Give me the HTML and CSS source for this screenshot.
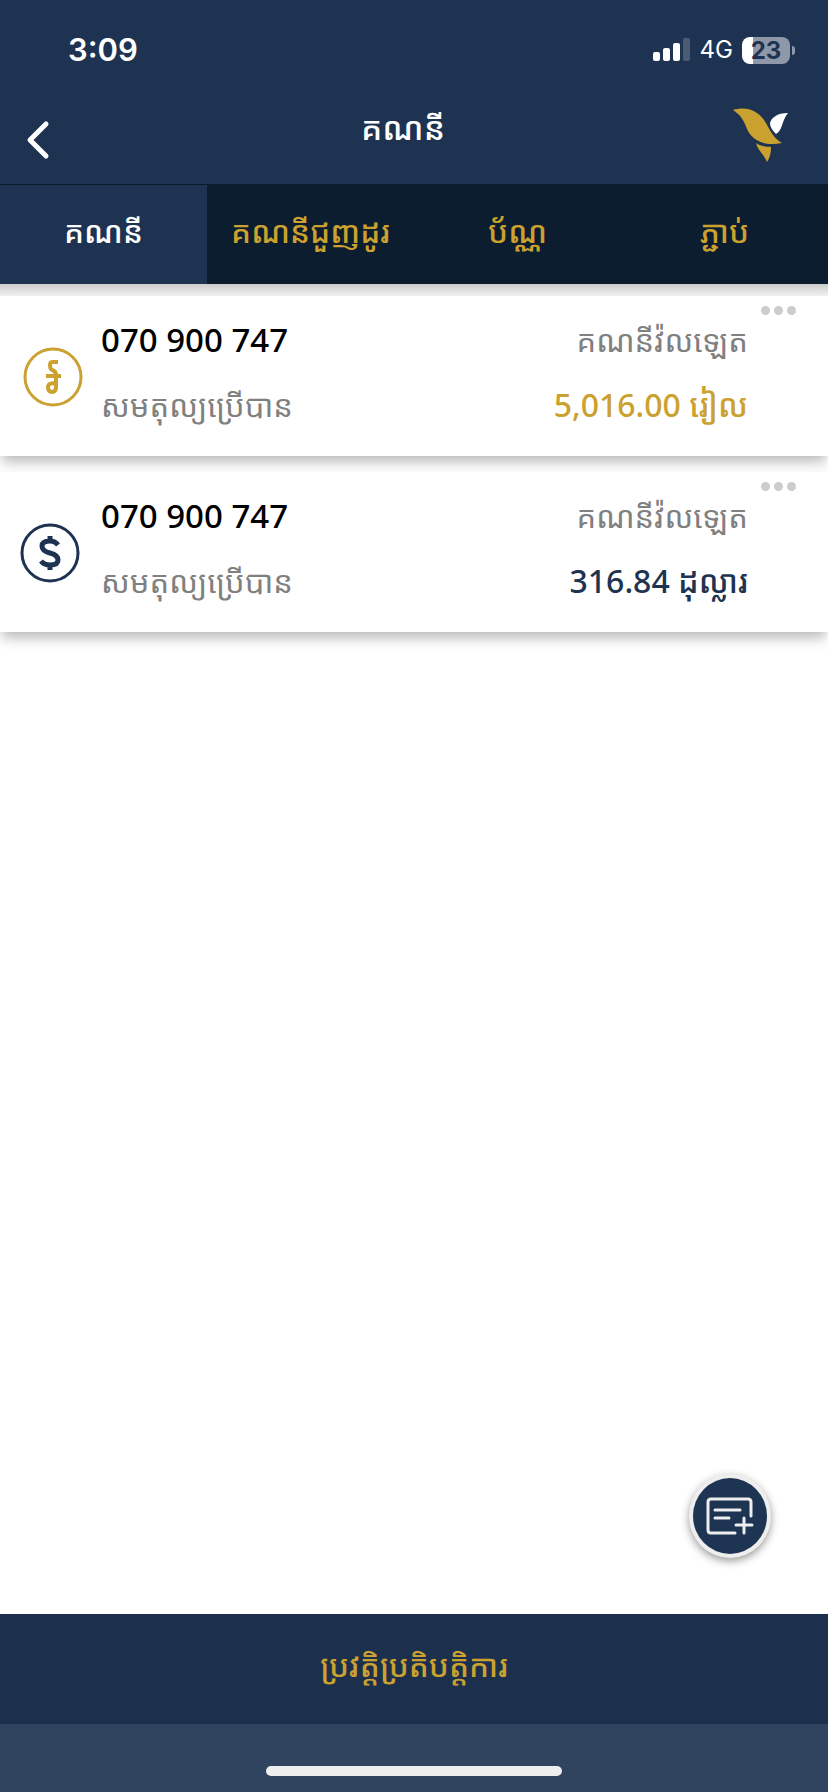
FILE: index.html
```html
<!DOCTYPE html>
<html lang="km">
<head>
<meta charset="utf-8">
<meta name="viewport" content="width=device-width, initial-scale=1">
<title>គណនី</title>
<link rel="stylesheet" href="styles.css">
</head>
<body>
<div class="app">
  <div class="status">
    <span class="time">3:09</span>
    <span class="indicators">
      <svg class="signal" viewBox="0 0 38 24" aria-hidden="true">
        <rect x="0" y="14" width="7" height="9" rx="2"/>
        <rect x="10" y="10" width="7" height="13" rx="2"/>
        <rect x="20" y="5" width="7" height="18" rx="2"/>
        <rect x="30" y="0" width="7" height="23" rx="2" opacity=".2"/>
      </svg>
      <span class="network">4G</span>
      <span class="battery"><span class="level">23</span></span>
    </span>
  </div>

  <header class="header">
    <button class="back" type="button" aria-label="ថយក្រោយ">
      <svg viewBox="0 0 24 40" aria-hidden="true"><path d="M20 4 L4 20 L20 36"/></svg>
    </button>
    <h1 class="title">គណនី</h1>
    <svg class="logo" viewBox="0 0 80 80" aria-hidden="true">
      <path fill="#cba12f" d="M13 20 C26 16 37 20 44 30 C50 39 52 47 62 53 C46 56 33 52 27 39 C24 31 21 25 13 20Z"/>
      <path fill="#fff" d="M68 23 C57 23 51 28 50 33 C50 37 53 41 56 44 C63 40 61 32 68 23Z"/>
      <path fill="#cba12f" d="M36 53 C40 56 46 57 51 57 C51 63 50 67 47 72 C44 64 38 61 36 53Z"/>
    </svg>
  </header>

  <nav class="tabs">
    <a class="tab active" href="#accounts" aria-current="page">គណនី</a>
    <a class="tab" href="#trading">គណនីជួញដូរ</a>
    <a class="tab" href="#cards">ប័ណ្ណ</a>
    <a class="tab" href="#link">ភ្ជាប់</a>
  </nav>

  <main class="content">
    <article class="card gold">
      <svg class="currency" viewBox="0 0 60 60" aria-hidden="true">
        <circle cx="30" cy="30" r="28"/>
        <path class="riel" d="M35 15 H30 Q27 15 27 18 Q27 22 29 23 Q33 24 33 28 V40 Q33 45 29 45 Q25 45 25 40 Q25 36 32 36 M23 29 H38"/>
      </svg>
      <div class="info">
        <strong class="number">070 900 747</strong>
        <span class="label">សមតុល្យប្រើបាន</span>
      </div>
      <div class="info end">
        <span class="label">គណនីវ៉លឡេត</span>
        <strong class="amount">5,016.00 រៀល</strong>
      </div>
      <button class="more" type="button" aria-label="ជម្រើស"><i></i><i></i><i></i></button>
    </article>

    <article class="card navy">
      <svg class="currency" viewBox="0 0 60 60" aria-hidden="true">
        <circle cx="30" cy="30" r="28"/>
        <path class="dollar" d="M38 22 Q35 18 30 18 Q22 18 22 23 Q22 28 30 30 Q38 32 38 37 Q38 42 30 42 Q24 42 21 38 M30 13 V18 M30 42 V47"/>
      </svg>
      <div class="info">
        <strong class="number">070 900 747</strong>
        <span class="label">សមតុល្យប្រើបាន</span>
      </div>
      <div class="info end">
        <span class="label">គណនីវ៉លឡេត</span>
        <strong class="amount">316.84 ដុល្លារ</strong>
      </div>
      <button class="more" type="button" aria-label="ជម្រើស"><i></i><i></i><i></i></button>
    </article>

    <button class="add" type="button" aria-label="បន្ថែមគណនី">
      <svg viewBox="0 0 48 38" aria-hidden="true"><path d="M29 36 H5 Q2 36 2 33 V5 Q2 2 5 2 H42 Q45 2 45 5 V19 M9 13 H34 M9 21 H23 M38 21 V36 M30 28 H46"/></svg>
    </button>
  </main>

  <footer class="footer">
    <button class="history" type="button">ប្រវត្តិប្រតិបត្តិការ</button>
    <div class="home"><span></span></div>
  </footer>
</div>
</body>
</html>
```
FILE: styles.css
```css
* {
  box-sizing: border-box;
}

body {
  margin: 0;
  background: #fff;
  font-family: "Noto Sans", "Noto Sans Khmer", sans-serif;
  font-size: 31px;
  line-height: 44px;
}

button {
  border: 0;
  padding: 0;
  background: none;
  font: inherit;
  color: inherit;
}

.app {
  display: flex;
  flex-direction: column;
  min-height: 100vh;
}

.status {
  display: flex;
  align-items: center;
  justify-content: space-between;
  height: 100px;
  padding: 0 33px 0 68px;
  background: #1e3351;
  color: #fff;
  font-family: Inter, sans-serif;
}

.time {
  font-size: 31px;
  font-weight: 600;
}

.indicators {
  display: flex;
  align-items: center;
  gap: 9px;
}

.signal {
  width: 38px;
  height: 24px;
  fill: #fff;
}

.network {
  font-size: 24px;
}

.battery {
  display: flex;
  align-items: center;
  gap: 2px;
}

.battery::after {
  content: "";
  width: 3px;
  height: 9px;
  border-radius: 0 4px 4px 0;
  background: #8e98a8;
}

.level {
  width: 48px;
  border-radius: 8px;
  background: linear-gradient(90deg, #fff 23%, #8e98a8 23%);
  color: #1e3351;
  font-size: 24px;
  font-weight: 700;
  line-height: 27px;
  text-align: center;
}

.header {
  display: grid;
  grid-template-columns: 86px 1fr 108px;
  height: 84px;
  background: #1e3351;
  color: #fff;
}

.back {
  padding: 0 0 4px 26px;
  text-align: left;
}

.back svg {
  display: block;
  width: 24px;
  height: 40px;
  fill: none;
  stroke: #fff;
  stroke-width: 5;
  stroke-linecap: round;
  stroke-linejoin: round;
}

.title {
  margin: 0;
  padding-top: 6px;
  font-size: 33px;
  font-weight: 500;
  text-align: center;
}

.logo {
  width: 80px;
  height: 80px;
  margin-top: -10px;
}

.tabs {
  display: grid;
  grid-template-columns: repeat(4, 1fr);
  height: 100px;
  border-top: 1px solid #0a1a2b;
  background: #0b1d2e;
}

.tab {
  display: flex;
  align-items: center;
  justify-content: center;
  padding-bottom: 8px;
  color: #cba12f;
  font-weight: 500;
  text-decoration: none;
}

.active {
  background: #1e3351;
  color: #fff;
}

.content {
  position: relative;
  display: flex;
  flex: 1;
  flex-direction: column;
  gap: 16px;
  padding-top: 12px;
  background: linear-gradient(#ccc, #f2f2f2 12px, #fff 12px);
}

.card {
  position: relative;
  display: flex;
  height: 160px;
  padding: 22px 80px 0 20px;
  background: #fff;
  box-shadow: 0 8px 12px -2px #bbb;
}

.gold {
  --accent: #cba12f;
  padding-left: 23px;
}

.navy {
  --accent: #1e3351;
}

.currency {
  width: 60px;
  height: 60px;
  margin-top: 29px;
  margin-right: 21px;
  fill: none;
  stroke: var(--accent);
  stroke-width: 3;
}

.gold .currency {
  margin-right: 18px;
}

.riel,
.dollar {
  stroke-width: 5;
  stroke-linejoin: round;
}

.riel {
  stroke-width: 4;
}

.info {
  display: flex;
  flex: 1;
  flex-direction: column;
  gap: 21px;
  white-space: nowrap;
}

.end {
  align-items: flex-end;
}

.number {
  color: #000;
  font-size: 33px;
  font-weight: 500;
}

.amount {
  color: var(--accent);
  font-size: 32px;
  font-weight: 500;
}

.label {
  color: #808080;
}

.more {
  position: absolute;
  top: 10px;
  right: 32px;
  display: flex;
  gap: 4px;
}

.more i {
  width: 9px;
  height: 9px;
  border-radius: 50%;
  background: #ccc;
}

.add {
  position: absolute;
  right: 57px;
  bottom: 56px;
  display: grid;
  place-items: center;
  width: 82px;
  height: 84px;
  border: 4px solid #eee;
  border-radius: 50%;
  background: #1d3552;
  box-shadow: 0 3px 8px #999;
}

.add svg {
  width: 48px;
  height: 38px;
  fill: none;
  stroke: #eee;
  stroke-width: 3;
  stroke-linecap: round;
}

.history {
  display: block;
  width: 100%;
  height: 110px;
  padding-bottom: 8px;
  background: #1c304e;
  color: #cba12f;
  font-weight: 500;
}

.home {
  display: flex;
  justify-content: center;
  height: 68px;
  padding-top: 42px;
  background: #31445f;
}

.home span {
  width: 296px;
  height: 10px;
  border-radius: 5px;
  background: #eee;
}
```
